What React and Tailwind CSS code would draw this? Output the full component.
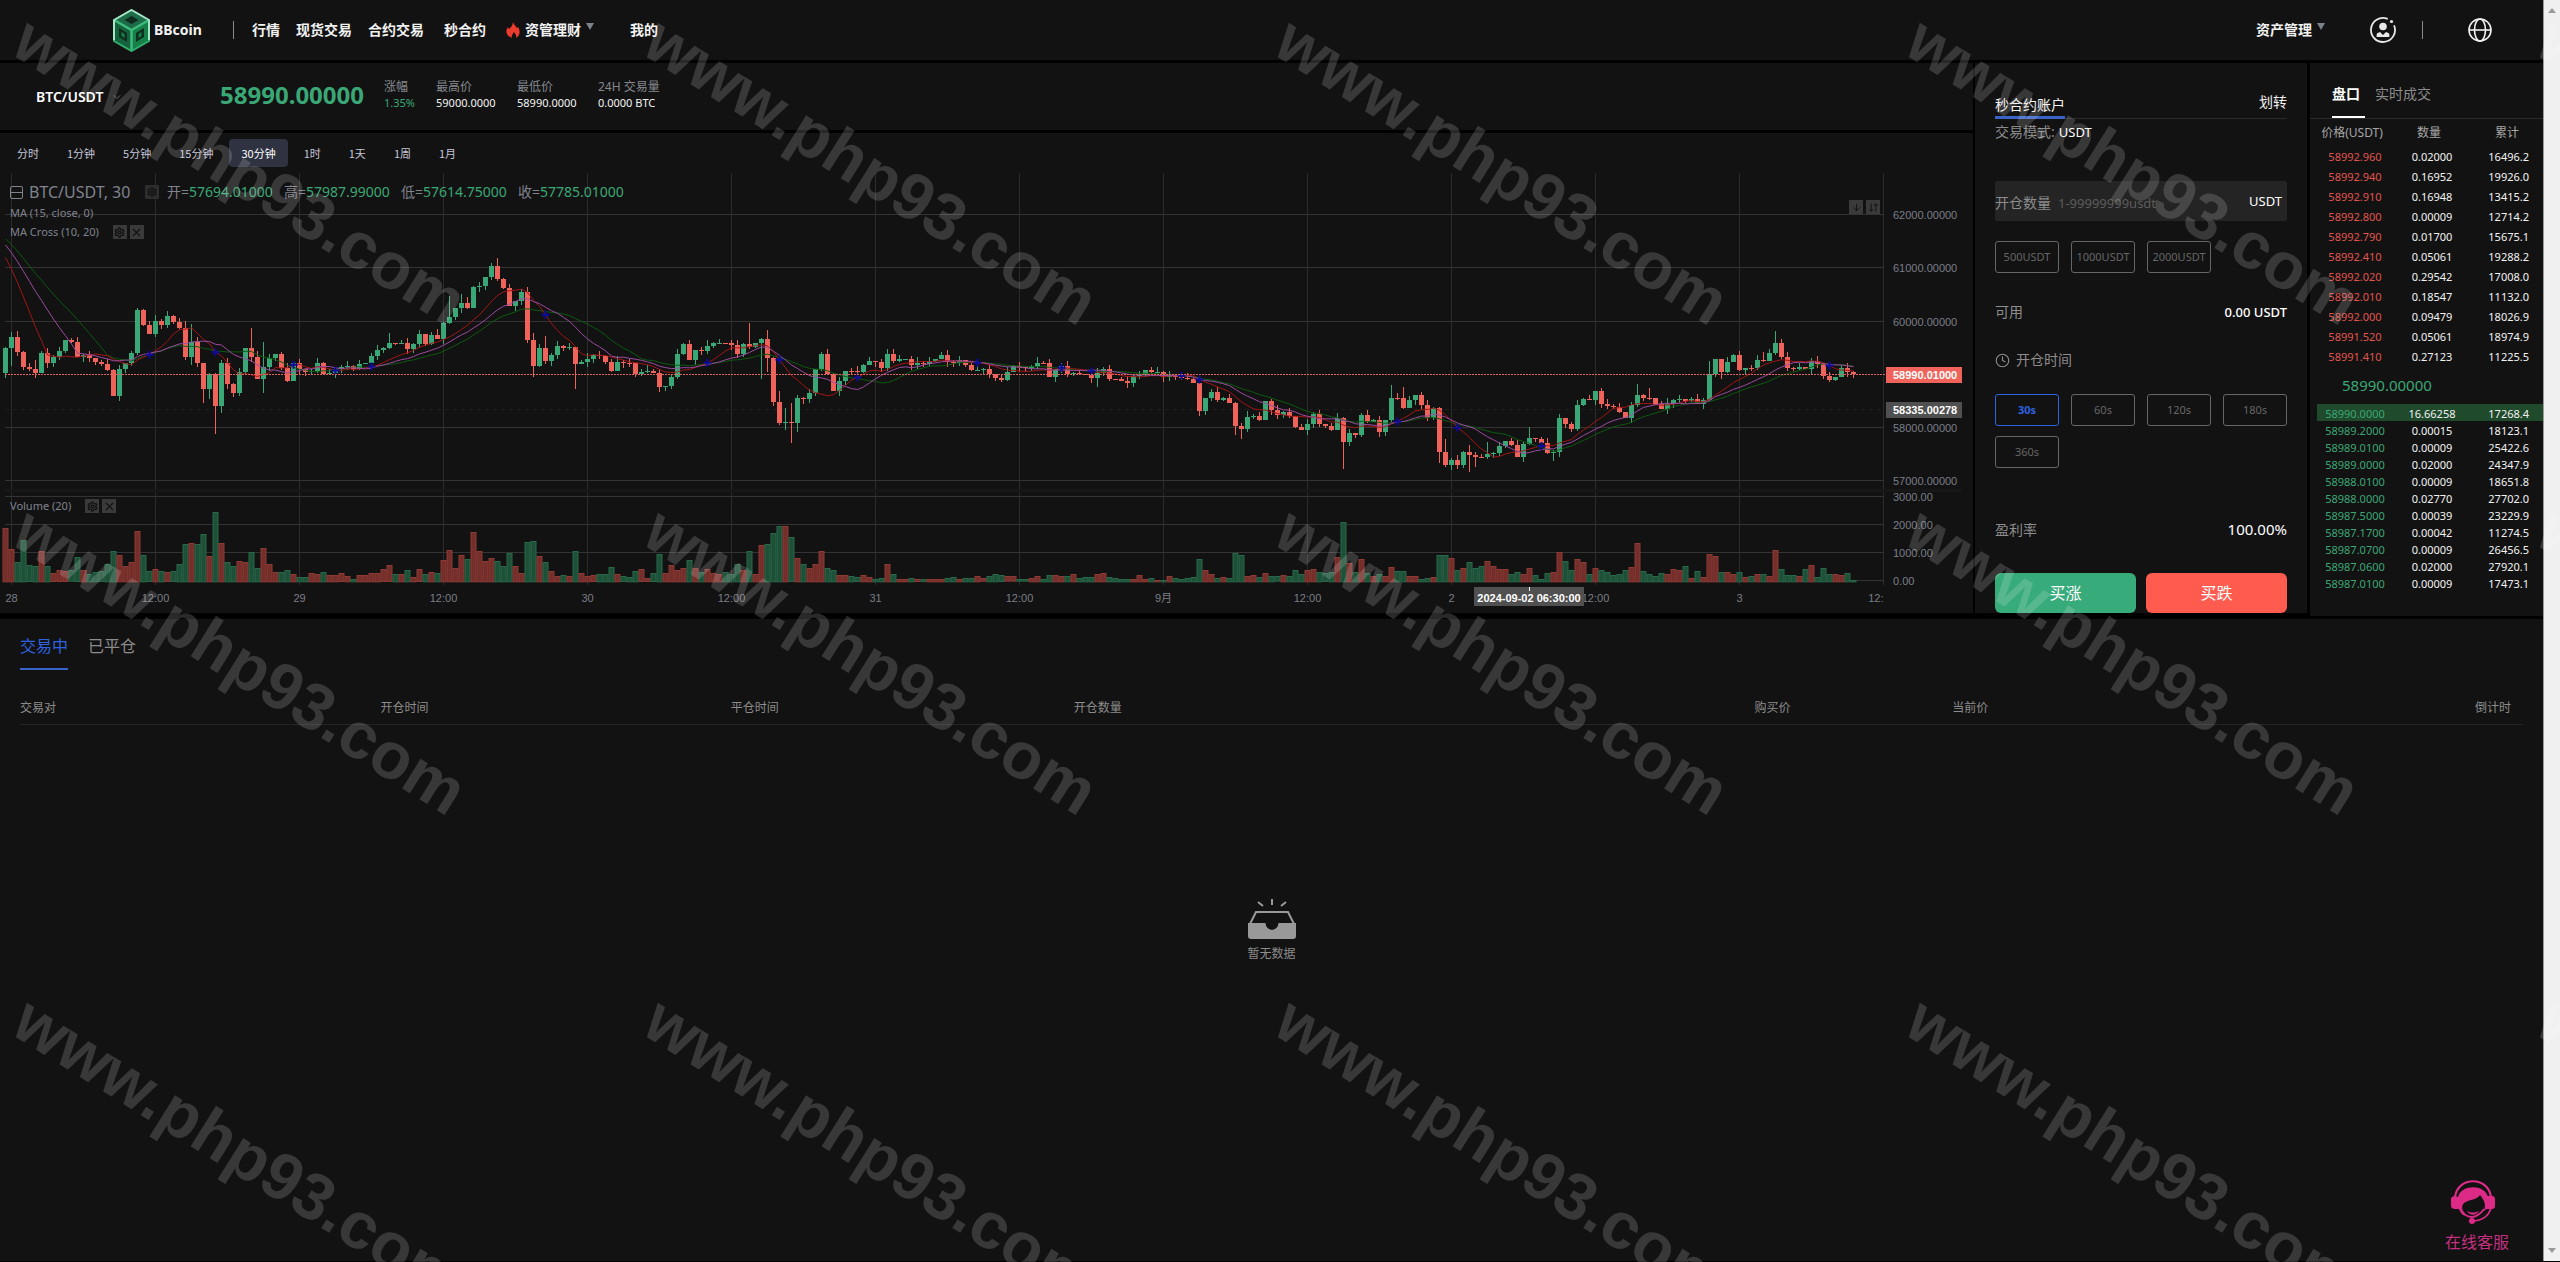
import { useState } from "react";
import { ChevronDown, Settings, X, Clock, ArrowDown, ArrowDownUp } from "lucide-react";

const navItems = ["行情", "现货交易", "合约交易", "秒合约"];
const stats = [
  { label: "涨幅", value: "1.35%", up: true, width: "w-[52px]" },
  { label: "最高价", value: "59000.0000", width: "w-[81px]" },
  { label: "最低价", value: "58990.0000", width: "w-[81px]" },
  { label: "24H 交易量", value: "0.0000 BTC", width: "w-[81px]" },
];
const periods = ["分时", "1分钟", "5分钟", "15分钟", "30分钟", "1时", "1天", "1周", "1月"];
const legend = [
  ["开", "57694.01000"],
  ["高", "57987.99000"],
  ["低", "57614.75000"],
  ["收", "57785.01000"],
];
const amounts = ["500USDT", "1000USDT", "2000USDT"];
const durations = ["30s", "60s", "120s", "180s", "360s"];

const asks = [
  ["58992.960", "0.02000", "16496.2"],
  ["58992.940", "0.16952", "19926.0"],
  ["58992.910", "0.16948", "13415.2"],
  ["58992.800", "0.00009", "12714.2"],
  ["58992.790", "0.01700", "15675.1"],
  ["58992.410", "0.05061", "19288.2"],
  ["58992.020", "0.29542", "17008.0"],
  ["58992.010", "0.18547", "11132.0"],
  ["58992.000", "0.09479", "18026.9"],
  ["58991.520", "0.05061", "18974.9"],
  ["58991.410", "0.27123", "11225.5"],
];
const bids = [
  ["58990.0000", "16.66258", "17268.4"],
  ["58989.2000", "0.00015", "18123.1"],
  ["58989.0100", "0.00009", "25422.6"],
  ["58989.0000", "0.02000", "24347.9"],
  ["58988.0100", "0.00009", "18651.8"],
  ["58988.0000", "0.02770", "27702.0"],
  ["58987.5000", "0.00039", "23229.9"],
  ["58987.1700", "0.00042", "11274.5"],
  ["58987.0700", "0.00009", "26456.5"],
  ["58987.0600", "0.02000", "27920.1"],
  ["58987.0100", "0.00009", "17473.1"],
];

// closes and volumes are in plot units, three to a pixel
const closes = [
  565, 530, 577, 620, 628, 638, 580, 610, 590, 573, 541, 546, 590, 585, 595, 607, 613, 631, 707, 626,
  610, 580, 450, 495, 521, 484, 494, 468, 487, 503, 590, 546, 610, 686, 642, 738, 610, 672, 698, 637,
  564, 590, 658, 621, 593, 583, 625, 662, 610, 626, 637, 633, 609, 643, 640, 627, 622, 619, 626, 613,
  610, 588, 570, 564, 549, 551, 549, 566, 552, 521, 551, 524, 537, 489, 471, 443, 428, 443, 381, 379,
  352, 318, 358, 385, 437, 424, 396, 541, 617, 563, 602, 586, 559, 563, 562, 613, 607, 596, 586, 589,
  605, 632, 605, 608, 609, 643, 635, 632, 638, 681, 678, 650, 583, 552, 599, 570, 572, 557, 549, 548,
  549, 556, 581, 552, 560, 550, 538, 595, 727, 788, 787, 789, 714, 716, 700, 626, 583, 643, 692, 662,
  633, 634, 635, 615, 602, 606, 624, 582, 604, 598, 597, 614, 608, 611, 604, 598, 585, 605, 608, 600,
  615, 631, 629, 627, 643, 653, 659, 637, 618, 621, 624, 622, 608, 609, 650, 627, 618, 643, 639, 641,
  646, 654, 640, 626, 656, 658, 664, 668, 647, 645, 630, 637, 636, 650, 645, 652, 654, 657, 670, 752,
  714, 696, 719, 715, 729, 797, 807, 770, 767, 780, 724, 750, 766, 757, 768, 801, 811, 793, 761, 793,
  797, 810, 774, 846, 820, 825, 766, 785, 781, 816, 780, 714, 715, 744, 719, 705, 735, 774, 745, 877,
  915, 901, 914, 877, 885, 890, 892, 882, 880, 857, 842, 855, 890, 851, 833, 838, 850, 878, 875, 774,
  793, 806, 735, 717, 720, 693, 733, 737, 740, 757, 774, 735, 705, 713, 715, 731, 748, 731, 720, 716,
  722, 718, 732, 719, 643, 598, 635, 607, 585, 629, 623, 624, 600, 602, 580, 549, 592, 625, 628, 622,
  627, 603, 613, 648, 659, 650, 624, 637, 643,
];
const volumes = [
  160, 97, 58, 124, 48, 46, 91, 46, 24, 33, 30, 32, 72, 34, 22, 28, 30, 52, 91, 79,
  46, 58, 151, 79, 30, 37, 31, 27, 30, 52, 112, 115, 112, 142, 76, 208, 115, 58, 46, 61,
  58, 88, 40, 100, 52, 28, 28, 34, 22, 13, 13, 25, 22, 28, 19, 19, 24, 16, 7, 19,
  19, 25, 25, 36, 48, 22, 22, 34, 13, 36, 22, 28, 25, 64, 94, 40, 79, 67, 148, 91,
  61, 70, 61, 46, 85, 46, 25, 118, 121, 76, 58, 31, 16, 19, 16, 91, 25, 16, 18, 22,
  22, 43, 22, 15, 13, 31, 36, 9, 24, 82, 25, 49, 34, 40, 64, 40, 28, 37, 25, 22,
  28, 22, 52, 34, 91, 22, 109, 112, 145, 166, 166, 132, 70, 52, 40, 52, 91, 40, 34, 19,
  19, 16, 12, 19, 13, 7, 10, 52, 22, 7, 7, 10, 6, 6, 7, 7, 7, 10, 13, 7,
  10, 10, 16, 8, 16, 22, 18, 14, 14, 5, 5, 10, 16, 7, 19, 19, 16, 16, 22, 10,
  13, 13, 22, 25, 13, 10, 7, 7, 7, 19, 7, 10, 4, 4, 16, 10, 7, 10, 13, 67,
  34, 22, 10, 13, 10, 85, 79, 16, 19, 13, 25, 16, 14, 19, 16, 34, 22, 34, 37, 28,
  24, 28, 73, 178, 55, 28, 67, 25, 16, 22, 16, 43, 31, 31, 16, 16, 7, 10, 13, 79,
  79, 70, 34, 40, 58, 40, 46, 61, 46, 37, 37, 22, 28, 22, 40, 19, 7, 25, 28, 88,
  61, 34, 67, 58, 22, 40, 34, 28, 19, 22, 34, 43, 115, 31, 22, 16, 25, 22, 37, 34,
  46, 10, 31, 13, 82, 76, 28, 28, 22, 28, 13, 16, 22, 22, 16, 94, 37, 19, 19, 16,
  37, 49, 13, 40, 22, 22, 19, 25, 4,
];
// [high, low] for the candles with a long shadow
const shadows = {
  0: [560, 655], 1: [515, 618], 5: [600, 655], 22: [445, 585], 25: [465, 532], 30: [483, 600],
  31: [491, 614], 33: [610, 728], 34: [640, 718], 35: [640, 822], 36: [600, 758], 41: [503, 605],
  43: [546, 700], 64: [519, 566], 74: [408, 492], 76: [402, 460], 81: [310, 360], 82: [293, 362],
  88: [520, 652], 90: [528, 612], 95: [560, 686], 124: [489, 568], 126: [534, 656], 127: [510, 635],
  129: [693, 795], 130: [745, 809], 131: [730, 848], 132: [706, 815], 148: [567, 608], 182: [625, 680],
  205: [725, 825], 206: [790, 836], 223: [770, 926], 231: [675, 785], 233: [680, 746], 239: [740, 908],
  240: [838, 922], 244: [855, 937], 245: [875, 920], 247: [846, 898], 254: [801, 855], 258: [870, 902],
  272: [673, 740], 274: [683, 720], 284: [603, 722], 286: [598, 658], 289: [574, 632], 293: [576, 606],
  295: [513, 584], 296: [538, 596],
};

const UP = "#3aa876";
const DOWN = "#f0635a";
const plotX = (i) => 5.5 + i * 6;
const plotY = (v) => v / 3 - 13;

const history = [...Array(17).fill(180), 550, 550];

function average(size) {
  const all = [...history, ...closes];
  return closes.map((_, i) => {
    const end = i + history.length + 1;
    return all.slice(end - size, end).reduce((a, b) => a + b, 0) / size;
  });
}

const ma10 = average(10);
const ma15 = average(15);
const ma20 = average(20);
const toPoints = (values) => values.map((v, i) => `${plotX(i)},${plotY(v).toFixed(1)}`).join(" ");
const crosses = ma10
  .map((v, i) => i)
  .filter((i) => i > 20 && (ma10[i] - ma20[i]) * (ma10[i - 1] - ma20[i - 1]) < 0);

const priceLines = [
  [41, "62000.00000"],
  [94, "61000.00000"],
  [148, "60000.00000"],
  [254, "58000.00000"],
  [307, "57000.00000"],
  [323, "3000.00"],
  [351, "2000.00"],
  [379, "1000.00"],
  [407, "0.00"],
];
const timeLabels = ["28", "12:00", "29", "12:00", "30", "12:00", "31", "12:00", "9月", "12:00", "2", "12:00", "3", "12:"];

function Chart() {
  return (
    <svg viewBox="0 0 1973 440" className="block w-full font-['Liberation_Sans','Noto_Sans_CJK_SC',sans-serif] text-[11px]">
      <g stroke="#2b2b2b" shapeRendering="crispEdges">
        {timeLabels.map((_, i) => (
          <line key={i} x1={11.5 + i * 144} x2={11.5 + i * 144} y1="0" y2="412" />
        ))}
        {priceLines.map(([y]) => (
          <line key={y} x1="5" x2="1884" y1={y + 0.5} y2={y + 0.5} stroke="#333333" />
        ))}
      </g>
      <rect x="5" y="316" width="1957" height="3" fill="#171717" />
      <line x1="5" x2="1884" y1="236.5" y2="236.5" stroke="#1f1f1f" strokeDasharray="4 4" />

      {volumes.map((v, i) => {
        const up = closes[i] < (closes[i - 1] ?? 640);
        return (
          <rect
            key={i}
            x={plotX(i) - 2.5}
            y={Math.round(408 - v / 3) + 0.5}
            width="5"
            height={v / 3}
            fill={up ? "#742f2b" : "#1e5038"}
            stroke={up ? "#8e3a35" : "#28694a"}
          />
        );
      })}

      {closes.map((close, i) => {
        const open = closes[i - 1] ?? 640;
        const top = Math.min(open, close);
        const bottom = Math.max(open, close);
        const [high, low] = shadows[i] ?? [top - ((i * 7) % 5) * 4, bottom + ((i * 11) % 6) * 3];
        const color = close < open ? UP : DOWN;
        return (
          <g key={i} fill={color} shapeRendering="crispEdges">
            <rect x={plotX(i) - 0.5} y={plotY(high)} width="1" height={(low - high) / 3} />
            <rect x={plotX(i) - 2.5} y={plotY(top)} width="5" height={Math.max(1, (bottom - top) / 3)} />
          </g>
        );
      })}

      <g fill="none">
        <polyline points={toPoints(ma20)} stroke="#0c5a10" />
        <polyline points={toPoints(ma10)} stroke="#a31515" />
        <polyline points={toPoints(ma15)} stroke="#9c4ba0" />
        {crosses.map((i) => (
          <path
            key={i}
            d={`M${plotX(i) - 4} ${plotY(ma10[i])}h8m-4 -4v8`}
            stroke="#0b0b9c"
            strokeWidth="2"
          />
        ))}
      </g>
      <line x1="5" x2="1886" y1="201.5" y2="201.5" stroke="#e0635c" strokeDasharray="2 1" />

      <g fill="#7b7e88">
        {priceLines.map(([y, label]) => (
          <text key={label} x="1893" y={y + 5}>{label}</text>
        ))}
        {timeLabels.map((label, i) => (
          <text key={i} x={11.5 + i * 144} y="429" textAnchor={i === 13 ? "end" : "middle"}>{label}</text>
        ))}
      </g>
      <g fill="#ffffff" stroke="none">
        <rect x="1886" y="194" width="76" height="16" fill="#f0635a" />
        <text x="1893" y="206" fontWeight="700">58990.01000</text>
        <rect x="1886" y="229" width="76" height="16" fill="#505050" />
        <text x="1893" y="241" fontWeight="700">58335.00278</text>
        <rect x="1474" y="414" width="110" height="19" fill="#505050" />
        <rect x="1529" y="414" width="1" height="4" />
        <text x="1529" y="429" textAnchor="middle" fontWeight="700">2024-09-02 06:30:00</text>
      </g>
    </svg>
  );
}

function LegendTools() {
  return (
    <span className="flex gap-[3px] text-[#121212]">
      <button aria-label="设置" className="flex size-[14px] items-center justify-center bg-[#3a3a3a]">
        <Settings size={11} strokeWidth={3} />
      </button>
      <button aria-label="移除" className="flex size-[14px] items-center justify-center bg-[#3a3a3a]">
        <X size={13} />
      </button>
    </span>
  );
}

function ChartPanel() {
  const [period, setPeriod] = useState("30分钟");
  return (
    <section className="mt-[3px] bg-[#121212]">
      <div className="flex h-10 items-center gap-1 px-[5px] font-['Noto_Sans_CJK_SC',sans-serif]">
        {periods.map((p) => (
          <button
            key={p}
            onClick={() => setPeriod(p)}
            className={`h-7 rounded px-3 text-[11px] ${p === period ? "bg-[#2f3241] text-white" : "text-[#c5c7d8]"}`}
          >
            {p}
          </button>
        ))}
      </div>
      <div className="relative text-[#80838e]">
        <Chart />
        <div className="absolute left-[10px] top-[7px] flex flex-col">
          <div className="flex h-6 items-center text-sm">
            <span className="mr-1.5 flex size-[13px] items-center rounded-xs border border-[#80838e]">
              <span className="h-px w-full bg-[#80838e]" />
            </span>
            <span className="w-[116px] text-base">BTC/USDT, 30</span>
            <button aria-label="图表设置" className="mr-2 flex size-[14px] items-center justify-center bg-[#2d2d2d] text-[#121212]">
              <Settings size={10} strokeWidth={3} />
            </button>
            {legend.map(([name, value]) => (
              <span key={name} className="w-[117px]">
                {name}=<span className="text-[#3aa876]">{value}</span>
              </span>
            ))}
          </div>
          <div className="flex h-[18px] items-center text-[11px]">MA (15, close, 0)</div>
          <div className="flex h-5 items-center gap-3.5 text-[11px]">
            MA Cross (10, 20)
            <LegendTools />
          </div>
        </div>
        <div className="absolute left-[10px] top-[323px] flex h-5 items-center gap-3.5 text-[11px]">
          Volume (20)
          <LegendTools />
        </div>
        <div className="absolute right-[93px] top-[27px] flex gap-[3px] text-[#121212]">
          <button aria-label="下移" className="flex size-[14px] items-center justify-center bg-[#3a3a3a]">
            <ArrowDown size={11} />
          </button>
          <button aria-label="展开" className="flex size-[14px] items-center justify-center bg-[#3a3a3a]">
            <ArrowDownUp size={11} />
          </button>
        </div>
      </div>
    </section>
  );
}

function Logo() {
  return (
    <svg width="37" height="43" viewBox="0 0 37 43">
      <path d="M18.5 1 36 11 18.5 21 1 11z" fill="#1d6b48" />
      <path d="M1 11l17.500 10v21L1 32z" fill="#14633c" />
      <path d="M18.500 21 36 11v21L18.500 42z" fill="#178048" />
      <path d="M18.500 7l7 4-7 4-7-4z" fill="#0f2a1e" />
      <path d="M6 19l8 5v9l-8-5zM31 19l-8 5v9l8-5z" fill="#0e2f1e" />
      <path d="M8.500 23l3 2v4l-3-2zM28.500 23l-3 2v4l3-2z" fill="#17804a" />
      <path d="M1 11 18.500 21 36 11M18.500 21v20" fill="none" stroke="#3dbb7c" strokeWidth="2.500" />
      <path d="M1 32V11L18.500 1 36 11v21" fill="none" stroke="#a5e6c6" strokeWidth="2" />
      <path d="M1 31v1l17.500 10L36 32v-1" fill="none" stroke="#2fae6d" strokeWidth="2" />
    </svg>
  );
}

function Caret() {
  return (
    <svg width="8" height="7" viewBox="0 0 8 7" className="mb-2 ml-[5px]">
      <path d="M0 0h8L4 7z" fill="#7d818c" />
    </svg>
  );
}

function Flame() {
  return (
    <svg width="14" height="16" viewBox="0 0 14 16" className="mr-[5px]">
      <path
        d="M7 0c1 3 3 4 4 6l1-1c2 3 3 8-2 11 1-3-1-4-2-6-1 2-3 3-2 6-6-2-7-7-4-11 0 1 1 2 1 2C5 5 7 3 7 0z"
        fill="#ec3c2e"
      />
    </svg>
  );
}

function UserIcon() {
  return (
    <svg width="26" height="26" viewBox="0 0 26 26" fill="#e8e8e8">
      <path d="M17 1.700A12 12 0 1 0 24.300 9" fill="none" stroke="#e8e8e8" strokeWidth="1.800" strokeLinecap="round" />
      <circle cx="21.500" cy="4.500" r="1.600" />
      <circle cx="13" cy="9.500" r="3.800" />
      <path d="M10 15l3 3 3-3 2.800 1.200c.6.300.8 2.800.5 3.800H6.700c-.3-1-.1-3.500.5-3.800z" />
    </svg>
  );
}

function GlobeIcon() {
  return (
    <svg width="24" height="24" viewBox="0 0 24 24" fill="none" stroke="#f2f2f2" strokeWidth="1.600">
      <circle cx="12" cy="12" r="11" />
      <ellipse cx="12" cy="12" rx="5.500" ry="11" />
      <path d="M1 12h22" />
    </svg>
  );
}

function Header() {
  return (
    <header className="flex h-[60px] items-center bg-[#121212] pl-[113px] pr-[51px] text-sm font-bold text-[#f2f2f2]">
      <Logo />
      <h1 className="ml-1 w-[79px]">BBcoin</h1>
      <span className="mr-[18px] h-[18px] w-px bg-[#8a8a8a]" />
      <nav className="flex items-center">
        {navItems.map((item) => (
          <a key={item} href="#" className={item === "秒合约" ? "ml-1 mr-5" : "mr-4"}>
            {item}
          </a>
        ))}
        <a href="#" className="mr-9 flex items-center">
          <Flame />
          资管理财
          <Caret />
        </a>
        <a href="#">我的</a>
      </nav>
      <a href="#" className="ml-auto mr-[45px] flex items-center">
        资产管理
        <Caret />
      </a>
      <button aria-label="账户">
        <UserIcon />
      </button>
      <span className="ml-[26px] mr-[45px] h-[18px] w-px bg-[#8a8a8a]" />
      <button aria-label="语言">
        <GlobeIcon />
      </button>
    </header>
  );
}

function Ticker() {
  return (
    <section className="flex h-[67px] items-center bg-[#121212] pl-9">
      <button className="flex w-[184px] items-center text-sm font-semibold text-white">
        BTC/USDT
        <ChevronDown size={12} className="ml-2 text-[#666666]" />
      </button>
      <strong className="w-[164px] pb-1 text-2xl text-[#3aa876]">58990.00000</strong>
      {stats.map((s) => (
        <dl key={s.label} className={`${s.width} whitespace-nowrap pb-1`}>
          <dt className="text-xs leading-4 text-[#85888f]">{s.label}</dt>
          <dd className={`text-[11px] leading-4 ${s.up ? "text-[#3aa876]" : "text-[#f2f2f2]"}`}>{s.value}</dd>
        </dl>
      ))}
    </section>
  );
}

function OptionButton({ active, children, onClick }) {
  return (
    <button
      onClick={onClick}
      className={`h-8 rounded-[3px] border text-[11px] ${
        active ? "border-[#2f62e0] font-bold text-[#2f62e0]" : "border-[#666666] text-[#666666]"
      }`}
    >
      {children}
    </button>
  );
}

function TradePanel() {
  const [duration, setDuration] = useState("30s");
  return (
    <section className="mb-[3px] w-[332px] shrink-0 bg-[#121212] px-5 text-sm text-[#8c8c8c]">
      <div className="flex h-14 items-end justify-between border-b border-[#2b2b2b]">
        <button className="-mb-px border-b-[3px] border-[#3a63c8] pb-px text-[#f2f2f2]">秒合约账户</button>
        <button className="pb-1.5 text-[#f2f2f2]">划转</button>
      </div>
      <div className="flex h-[26px] items-center gap-1">
        交易模式: <span className="text-[13px] text-white">USDT</span>
      </div>
      <div className="mt-9 flex h-10 items-center rounded-xs bg-[#242424] pr-[5px] pt-1">
        <label htmlFor="amount">开仓数量</label>
        <input
          id="amount"
          placeholder="1-99999999usdt"
          className="ml-[7px] min-w-0 flex-1 bg-transparent text-[13px] outline-none placeholder:text-[#5c5c5c]"
        />
        <span className="pb-1 text-[13px] text-white">USDT</span>
      </div>
      <div className="mt-5 grid grid-cols-4 gap-x-3">
        {amounts.map((a) => (
          <OptionButton key={a}>{a}</OptionButton>
        ))}
      </div>
      <div className="mt-[27px] flex h-6 items-center justify-between">
        可用 <span className="text-[13px] font-medium text-white">0.00 USDT</span>
      </div>
      <div className="mt-6 flex h-6 items-center gap-1.5">
        <Clock size={15} strokeWidth={1.8} /> 开仓时间
      </div>
      <div className="mt-[22px] grid grid-cols-4 gap-x-3 gap-y-2.5">
        {durations.map((d) => (
          <OptionButton key={d} active={d === duration} onClick={() => setDuration(d)}>
            {d}
          </OptionButton>
        ))}
      </div>
      <div className="mt-[50px] flex h-6 items-center justify-between">
        盈利率 <span className="text-[15px] text-white">100.00%</span>
      </div>
      <div className="mt-[31px] grid grid-cols-2 gap-2.5 text-base text-white">
        <button className="h-10 rounded-md bg-[#37ab7a]">买涨</button>
        <button className="h-10 rounded-md bg-[#ff5c4f]">买跌</button>
      </div>
    </section>
  );
}

function OrderBook() {
  return (
    <section className="w-[233px] shrink-0 bg-[#121212] text-[#f2f2f2]">
      <div className="flex h-14 items-end gap-2.5 border-b border-[#2b2b2b] pl-[22px] text-sm">
        <button className="border-b-2 border-white pb-3 pr-[5px] font-bold text-white">盘口</button>
        <button className="pb-3.5 text-[#8c8c8c]">实时成交</button>
      </div>
      <table className="ml-[7px] w-[226px] table-fixed text-center text-[11px]">
        <thead className="text-xs text-[#a6a6a6]">
          <tr className="h-7">
            <th className="w-[70px] p-0 font-normal">价格(USDT)</th>
            <th className="w-[84px] p-0 font-normal">数量</th>
            <th className="p-0 font-normal">累计</th>
          </tr>
        </thead>
        <tbody>
          {asks.map(([price, qty, total]) => (
            <tr key={price} className="h-5 leading-5">
              <td className="p-0 pl-1.5 text-[#e0554d]">{price}</td>
              <td className="p-0 pl-1.5">{qty}</td>
              <td className="p-0 pr-3.5 text-right">{total}</td>
            </tr>
          ))}
          <tr className="h-[37px]">
            <td colSpan={3} className="p-0 pl-[25px] text-left text-[15px] text-[#3aa876]">58990.00000</td>
          </tr>
          {bids.map(([price, qty, total], i) => (
            <tr key={price} className={`h-[17px] leading-[14px] ${i === 0 ? "bg-[#1f4a2c]" : ""}`}>
              <td className="p-0 pl-1.5 pt-[3px] text-[#3aa876]">{price}</td>
              <td className="p-0 pl-1.5 pt-[3px]">{qty}</td>
              <td className="p-0 pr-3.5 pt-[3px] text-right">{total}</td>
            </tr>
          ))}
        </tbody>
      </table>
    </section>
  );
}

function EmptyIcon() {
  return (
    <svg width="50" height="42" viewBox="0 0 50 42" className="mx-auto">
      <path d="M25 1v6M11 4l5 4M39 4l-5 4" stroke="#999999" strokeWidth="2" />
      <path d="M3 26 9 14h32l6 12" fill="none" stroke="#999999" strokeWidth="2" />
      <path d="M1 25h17.500c.5 9 12.500 9 13 0H49v13a3 3 0 0 1-3 3H4a3 3 0 0 1-3-3z" fill="#999999" />
    </svg>
  );
}

function Positions() {
  return (
    <section className="mt-[3px] flex min-h-[642px] flex-col bg-[#121212] px-5 text-[#8c8c8c]">
      <div className="mt-[15px] flex gap-5 text-base">
        <button className="border-b-2 border-[#3a63c8] pb-2.5 text-[#2f62e0]">交易中</button>
        <button className="pb-3">已平仓</button>
      </div>
      <table className="mt-[18px] w-full table-fixed text-left text-xs">
        <thead>
          <tr className="h-9 border-b border-[#242424]">
            <th className="w-[14.4%] p-0 pt-1 font-normal">交易对</th>
            <th className="w-[14%] p-0 pt-1 font-normal">开仓时间</th>
            <th className="w-[13.7%] p-0 pt-1 font-normal">平仓时间</th>
            <th className="w-[27.2%] p-0 pt-1 font-normal">开仓数量</th>
            <th className="w-[7.9%] p-0 pt-1 font-normal">购买价</th>
            <th className="p-0 pt-1 font-normal">当前价</th>
            <th className="p-0 pr-3 pt-1 text-right font-normal">倒计时</th>
          </tr>
        </thead>
      </table>
      <div className="mt-[173px] text-center text-xs">
        <EmptyIcon />
        <p className="mt-1.5">暂无数据</p>
      </div>
    </section>
  );
}

function Support() {
  return (
    <a href="#" className="absolute bottom-2 right-[51px] text-base text-[#c4307f]">
      <svg width="44" height="44" viewBox="0 0 44 44" className="mb-1.5 ml-1.5">
        <path d="M4 17C7-4 37-4 40 17" fill="none" stroke="#dc2a86" strokeWidth="2.200" />
        <path
          d="M7 17C10 4 34 4 37 17v11l-4 3c2-6 1-10-4-16-3 5-10 4-16 8-3 3-2 8 1 13-3-1-5-4-6-7H4c-2 0-4-1-4-3v-7c0-2 2-3 4-3z"
          fill="#dc2a86"
        />
        <path d="M36 16h5c2 0 3 1 3 3v7c0 2-1 3-3 3h-5z" fill="#dc2a86" />
        <path d="M40 28c-2 7-8 13-19 13M11 31c3 5 7 6 10 6s9-3 12-8" fill="none" stroke="#dc2a86" strokeWidth="1.800" />
        <path d="M16 31c4 2 8 2 12 0-3 5-9 5-12 0z" fill="#dc2a86" />
        <circle cx="21" cy="41" r="3" fill="#dc2a86" />
      </svg>
      在线客服
    </a>
  );
}

function Watermark() {
  const marks = [0, 1, 2].flatMap((row) => [0, 1, 2, 3, 4].map((col) => [row, col]));
  return (
    <div aria-hidden="true" className="pointer-events-none absolute inset-0 overflow-hidden">
      {marks.map(([row, col]) => (
        <span
          key={`${row}-${col}`}
          className="absolute origin-bottom-left rotate-[32deg] font-['Liberation_Sans',Arial,sans-serif] text-[66px] leading-[52px] font-bold text-white/16"
          style={{ left: 7 + col * 631, top: 3 + row * 490 }}
        >
          www.php93.com
        </span>
      ))}
    </div>
  );
}

export default function App() {
  return (
    <div className="relative flex min-h-screen overflow-hidden bg-black pb-px font-['Noto_Sans','Noto_Sans_CJK_SC',sans-serif]">
      <main className="min-w-0 flex-1">
        <Header />
        <div className="mt-[3px] flex gap-[3px]">
          <div className="-mr-px mb-[3px] min-w-0 flex-1">
            <Ticker />
            <ChartPanel />
          </div>
          <TradePanel />
          <OrderBook />
        </div>
        <Positions />
      </main>
      <aside className="flex w-[17px] flex-col items-center justify-between border-l border-[#9a9a9a] bg-[#f0f0f0] py-2">
        <svg width="8" height="5" viewBox="0 0 8 5"><path d="M0 5h8L4 0z" fill="#9a9a9a" /></svg>
        <svg width="8" height="5" viewBox="0 0 8 5"><path d="M0 0h8L4 5z" fill="#9a9a9a" /></svg>
      </aside>
      <Support />
      <Watermark />
    </div>
  );
}
